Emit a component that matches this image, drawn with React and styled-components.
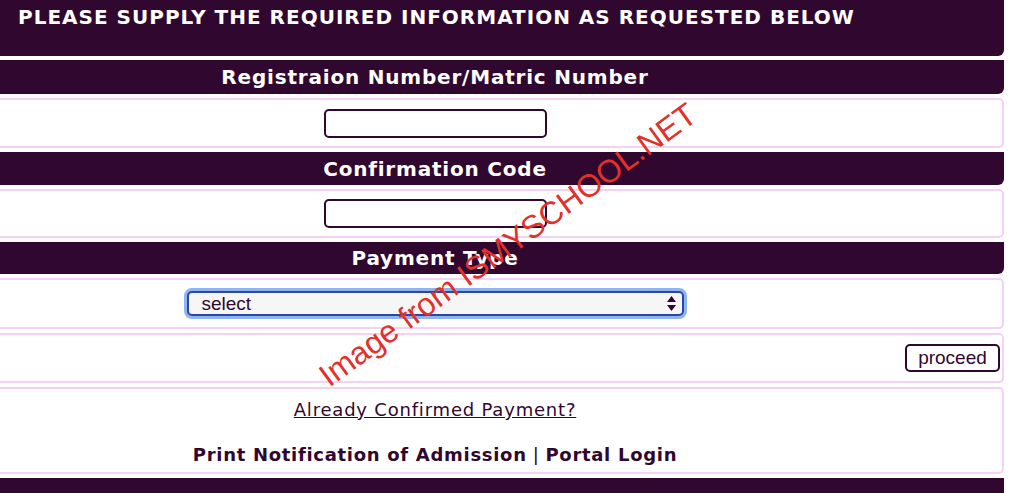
import React from "react"
import styled, { createGlobalStyle } from "styled-components"

const PURPLE = "#30072f"
const PINK = "#f3d2f6"

const GlobalStyle = createGlobalStyle`
  html, body {
    margin: 0;
    padding: 0;
    background: #fff;
    overflow: hidden;
  }
  body {
    font-family: "DejaVu Sans", Verdana, sans-serif;
    color: ${PURPLE};
  }
`

const Page = styled.div`
  position: relative;
  width: 1024px;
  height: 493px;
  overflow: hidden;
`

const Stack = styled.div`
  margin-left: -134px;
  width: 1138px;
  display: flex;
  flex-direction: column;
  gap: 4px;
`

const TitleBar = styled.div`
  height: 56px;
  box-sizing: border-box;
  background: ${PURPLE};
  border-radius: 0 0 6px 0;
  color: #fff;
  font-weight: bold;
  font-size: 20px;
  letter-spacing: 1px;
  padding: 5px 0 0 152px;
`

const Header = styled.div`
  height: ${({ h }) => h}px;
  background: ${PURPLE};
  border-radius: 0 0 6px 0;
  color: #fff;
  font-weight: bold;
  font-size: 20px;
  letter-spacing: 0.8px;
  display: flex;
  align-items: center;
  justify-content: center;
`

const Box = styled.div`
  height: ${({ h }) => h}px;
  box-sizing: border-box;
  border: 2px solid ${PINK};
  border-radius: 5px;
  background: #fff;
  display: flex;
  align-items: center;
  justify-content: ${({ end }) => (end ? "flex-end" : "center")};
  padding-right: ${({ end }) => (end ? "2px" : "0")};
`

const LinksBox = styled(Box)`
  flex-direction: column;
  justify-content: flex-start;
  padding-top: 10px;
  gap: 24px;
`

const TextInput = styled.input`
  width: 223px;
  height: 29px;
  box-sizing: border-box;
  border: 2px solid ${PURPLE};
  border-radius: 5px;
  background: #fff;
  outline: none;
`

const SelectWrap = styled.div`
  position: relative;
  width: 503px;
  height: 31px;
  box-sizing: border-box;
  border-radius: 8px;
  padding: 3px;
  background: #8fb4f2;
`

const Select = styled.select`
  appearance: none;
  width: 100%;
  height: 100%;
  box-sizing: border-box;
  border: 2px solid #2b47a6;
  border-radius: 5px;
  background: #f6f6f6;
  font-family: "Liberation Sans", Arial, sans-serif;
  font-size: 19px;
  color: ${PURPLE};
  padding: 0 0 0 13px;
  outline: none;
`

const Arrows = styled.svg`
  position: absolute;
  right: 11px;
  top: 8px;
  pointer-events: none;
`

const ProceedButton = styled.button`
  width: 95px;
  height: 28px;
  box-sizing: border-box;
  border: 2px solid ${PURPLE};
  border-radius: 5px;
  background: #fff;
  font-family: "Liberation Sans", Arial, sans-serif;
  font-size: 19px;
  color: ${PURPLE};
  padding: 0;
`

const PlainLink = styled.a`
  font-size: 18px;
  letter-spacing: 0.8px;
  color: ${PURPLE};
  text-decoration: underline;
`

const BoldLinks = styled.div`
  font-size: 18px;
  letter-spacing: 0.7px;
  font-weight: bold;
  color: ${PURPLE};
`

const Divider = styled.span`
  font-weight: normal;
  margin: 0 6px;
`

const FooterBar = styled.div`
  height: 20px;
  background: ${PURPLE};
`

const Watermark = styled.div`
  position: absolute;
  left: 508px;
  top: 245px;
  transform: translate(-50%, -50%) rotate(-36deg);
  font-family: "Liberation Sans", Arial, sans-serif;
  font-size: 32px;
  color: #e2302b;
  white-space: nowrap;
  pointer-events: none;
`

export default function App() {
  return (
    <>
      <GlobalStyle />
      <Page>
        <Stack>
          <TitleBar>PLEASE SUPPLY THE REQUIRED INFORMATION AS REQUESTED BELOW</TitleBar>
          <Header h={34}>Registraion Number/Matric Number</Header>
          <Box h={50}>
            <TextInput type="text" />
          </Box>
          <Header h={33}>Confirmation Code</Header>
          <Box h={49}>
            <TextInput type="text" />
          </Box>
          <Header h={32}>Payment Type</Header>
          <Box h={51}>
            <SelectWrap>
              <Select defaultValue="select">
                <option value="select">select</option>
              </Select>
              <Arrows width="9" height="15" viewBox="0 0 9 15">
                <path d="M4.5 0 L9 6 L0 6 Z" fill={PURPLE} />
                <path d="M4.5 15 L9 9 L0 9 Z" fill={PURPLE} />
              </Arrows>
            </SelectWrap>
          </Box>
          <Box h={50} end>
            <ProceedButton>proceed</ProceedButton>
          </Box>
          <LinksBox h={87}>
            <PlainLink href="#">Already Confirmed Payment?</PlainLink>
            <BoldLinks>
              Print Notification of Admission<Divider>|</Divider>Portal Login
            </BoldLinks>
          </LinksBox>
          <FooterBar />
        </Stack>
        <Watermark>Image from ISMYSCHOOL.NET</Watermark>
      </Page>
    </>
  )
}
